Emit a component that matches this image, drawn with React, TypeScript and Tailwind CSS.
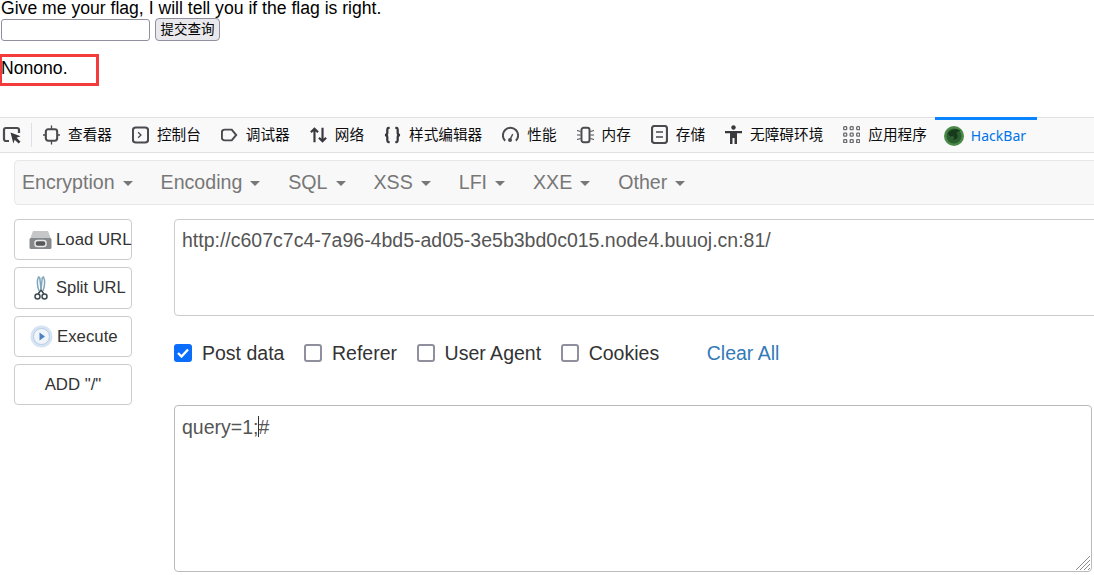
const cjk = "font-['Microsoft_YaHei','Noto_Sans','Noto_Sans_CJK_SC',sans-serif]";

function PickerIcon() {
  return (
    <svg width="20" height="20" viewBox="0 0 20 20" fill="none">
      <path d="M7 16H4a2 2 0 0 1-2-2V5a2 2 0 0 1 2-2h11a2 2 0 0 1 2 2v3" stroke="#4a4a4f" strokeWidth="2.200" />
      <path d="M8.500 7.500l10 3.800-3.900 1.500 3.900 3.900-1.900 1.900-3.900-3.900-1.300 3.900z" fill="#38383d" />
    </svg>
  );
}

const tabs: { label: string; icon: React.ReactNode }[] = [
  {
    label: "查看器",
    icon: (
      <svg width="18" height="20" viewBox="0 0 18 20" fill="none" stroke="#4a4a4f" strokeWidth="2.200">
        <rect x="3" y="4" width="12" height="12" rx="2.500" />
        <path d="M9 0v4M9 16v4M0 10h3M15 10h3" strokeWidth="1.400" />
      </svg>
    ),
  },
  {
    label: "控制台",
    icon: (
      <svg width="18" height="18" viewBox="0 0 18 18" fill="none" stroke="#4a4a4f">
        <rect x="1" y="1" width="16" height="16" rx="3" strokeWidth="2.200" />
        <path d="M6.500 6l3 3-3 3" strokeWidth="1.400" />
      </svg>
    ),
  },
  {
    label: "调试器",
    icon: (
      <svg width="19" height="16" viewBox="0 0 19 16" fill="none" stroke="#4a4a4f" strokeWidth="2.200">
        <path d="M4 2h8l5 6-5 6H4a3 3 0 0 1-3-3V5a3 3 0 0 1 3-3z" />
      </svg>
    ),
  },
  {
    label: "网络",
    icon: (
      <svg width="19" height="18" viewBox="0 0 19 18" fill="none" stroke="#38383d" strokeWidth="2.400">
        <path d="M5 17V2M1 6l4-4 4 4M14 1v15M10 12l4 4 4-4" />
      </svg>
    ),
  },
  {
    label: "样式编辑器",
    icon: (
      <svg width="18" height="18" viewBox="0 0 18 18" fill="none" stroke="#38383d" strokeWidth="2.400">
        <path d="M6 1.500H5C3.500 1.500 3.500 2.500 3.500 4v2.500C3.500 8 3 9 1 9c2 0 2.500 1 2.500 2.500V14c0 1.500 0 2.500 1.500 2.500h1" />
        <path d="M12 1.500h1c1.500 0 1.500 1 1.500 2.500v2.500C14.500 8 15 9 17 9c-2 0-2.500 1-2.500 2.500V14c0 1.500 0 2.500-1.500 2.500h-1" />
      </svg>
    ),
  },
  {
    label: "性能",
    icon: (
      <svg width="19" height="18" viewBox="0 0 19 18" fill="none" stroke="#4a4a4f" strokeWidth="2.200">
        <path d="M3.500 15.500A8.500 8.500 0 1 1 15.500 15.500" />
        <circle cx="9" cy="14.500" r="2.200" fill="#4a4a4f" stroke="none" />
        <path d="M9.500 13l2.500-5" strokeWidth="1.500" />
      </svg>
    ),
  },
  {
    label: "内存",
    icon: (
      <svg width="19" height="18" viewBox="0 0 19 18" fill="none" stroke="#4a4a4f">
        <rect x="5" y="1" width="9" height="16" rx="2.500" strokeWidth="2.200" />
        <path d="M0 4l4 1M0 9h4M0 14l4-1M15 5l4-1M15 9h4M15 13l4 1" strokeWidth="1.200" />
      </svg>
    ),
  },
  {
    label: "存储",
    icon: (
      <svg width="17" height="19" viewBox="0 0 17 19" fill="none" stroke="#4a4a4f">
        <rect x="1" y="1" width="15" height="17" rx="2.500" strokeWidth="2.200" />
        <path d="M5 7h7M5 12h7" strokeWidth="1.500" />
      </svg>
    ),
  },
  {
    label: "无障碍环境",
    icon: (
      <svg width="17" height="19" viewBox="0 0 17 19" fill="#38383d">
        <circle cx="8.500" cy="2.500" r="2.200" />
        <path d="M0 6h17v2.200h-5V19H9.500v-6h-2v6H5V8.200H0z" />
      </svg>
    ),
  },
  {
    label: "应用程序",
    icon: (
      <svg width="17" height="17" viewBox="0 0 17 17" fill="none" stroke="#6a6a6f" strokeWidth="1.300">
        {[0, 6.500, 13].flatMap((y) =>
          [0, 6.500, 13].map((x) => <rect key={`${x}-${y}`} x={x + 0.7} y={y + 0.7} width="3" height="3" rx="0.800" />),
        )}
      </svg>
    ),
  },
];

function HackBarIcon() {
  return (
    <svg width="20" height="20" viewBox="0 0 20 20">
      <circle cx="10" cy="10" r="10" fill="#4a8a48" />
      <circle cx="10" cy="10" r="7.500" fill="#2c5f30" />
      <path d="M4 7c3-4 9-5 13-2-3 0-5 1-4 3 2 2 0 6-4 6 2-2 1-4-1-4-2 1-3 0-4-3z" fill="#173a1c" />
    </svg>
  );
}

function DriveIcon() {
  return (
    <svg width="23" height="20" viewBox="0 0 23 20">
      <path d="M4 1h15l3 8H1z" fill="#c4c6c7" />
      <rect x="0.500" y="8" width="22" height="11" rx="1.500" fill="#85898b" />
      <rect x="6" y="10.500" width="11" height="6" rx="2.500" fill="#55595b" stroke="#e8e8e8" strokeWidth="1.500" />
    </svg>
  );
}

function ScissorsIcon() {
  return (
    <svg width="14" height="25" viewBox="0 0 14 25" fill="none">
      <path d="M5 15C3 9 2.500 5 4.500 1c1 0 1.500 1 1.500 3l1 9" stroke="#7fa6bb" strokeWidth="1.500" />
      <path d="M9 15c2-6 2.500-10 .5-14-1 0-1.500 1-1.500 3l-1 9" stroke="#7fa6bb" strokeWidth="1.500" />
      <circle cx="3.500" cy="20.500" r="2.500" stroke="#3d4a50" strokeWidth="1.500" />
      <circle cx="10.500" cy="20.500" r="2.500" stroke="#3d4a50" strokeWidth="1.500" />
      <path d="M4 18l3-4 3 4" stroke="#3d4a50" strokeWidth="1.500" />
    </svg>
  );
}

function PlayIcon() {
  return (
    <svg width="23" height="23" viewBox="0 0 23 23">
      <circle cx="11.500" cy="11.500" r="11" fill="#d5e3f3" />
      <circle cx="11.500" cy="11.500" r="8" fill="#f1f4f8" stroke="#b7cde6" />
      <path d="M9.500 7.500l5.500 4-5.500 4z" fill="#4a83c4" />
    </svg>
  );
}

const menus = ["Encryption", "Encoding", "SQL", "XSS", "LFI", "XXE", "Other"];

const sideButtons: { label: string; icon?: React.ReactNode; h: string; text?: string }[] = [
  { label: "Load URL", icon: <DriveIcon />, h: "h-[41px]" },
  { label: "Split URL", icon: <ScissorsIcon />, h: "h-[42px]", text: "-ml-px -mt-px text-[16.500px]" },
  { label: "Execute", icon: <PlayIcon />, h: "h-[41px]" },
  { label: 'ADD "/"', h: "h-[41px]" },
];

function Check({ label, checked }: { label: string; checked?: boolean }) {
  return (
    <label className="flex items-center gap-[10px]">
      {checked ? (
        <span className="flex h-[18px] w-[18px] items-center justify-center rounded-[3px] bg-[#0b6dfb]">
          <svg width="12" height="10" viewBox="0 0 12 10" fill="none" stroke="white" strokeWidth="2.400">
            <path d="M1 5l3.500 3.500L11 1.500" />
          </svg>
        </span>
      ) : (
        <span className="h-[18px] w-[18px] rounded-[3px] border-2 border-[#8f8f9d] bg-white" />
      )}
      <span className="pt-px">{label}</span>
    </label>
  );
}

export default function App() {
  return (
    <div className="h-[575px] w-[1094px] overflow-hidden bg-white">
      <section className="h-[117px] font-['Liberation_Sans',sans-serif] text-[17.600px] leading-[17px] text-black">
        <div className="whitespace-nowrap pl-px">Give me your flag, I will tell you if the flag is right.</div>
        <div className="flex items-start gap-[5px] pl-px">
          <input className="mt-[2px] h-[22px] w-[149px] rounded-[3px] border border-[#8f8f9d] bg-white" />
          <button className={`mt-px h-[23px] w-[65px] rounded-[4px] border border-[#8f8f9d] bg-[#e9e9ed] text-[13.500px] leading-none ${cjk}`}>
            提交查询
          </button>
        </div>
        <div className="mt-[13px] flex h-[32px] w-[99px] items-center border-[3px] border-l-2 border-[#f33b3b]">
          <span className="-ml-px -mt-[3px]">Nonono.</span>
        </div>
      </section>

      <nav className={`flex h-[36px] items-center border-y border-[#e0e0e2] bg-[#f9f9fa] text-[14.650px] text-[#0c0c0d] ${cjk}`}>
        <div className="flex items-center pl-[2px]">
          <PickerIcon />
          <div className="ml-[9px] h-[24px] w-px bg-[#e0e0e2]" />
        </div>
        <div className="ml-[1px] flex h-full items-center">
          {tabs.map((t) => (
            <div key={t.label} className="flex items-center gap-[8px] px-[10px] whitespace-nowrap">
              <span className="flex w-[17px] justify-center">{t.icon}</span>
              <span className="-mt-px">{t.label}</span>
            </div>
          ))}
          <div className="-ml-[2px] -mt-px flex h-[36px] w-[102px] items-center gap-[7px] border-t-[3px] border-[#0a84ff] pl-[9px] text-[14px] text-[#0074e8]">
            <HackBarIcon />
            <span className="-mt-[2px]">HackBar</span>
          </div>
        </div>
      </nav>

      <div className="pl-[14px] pt-[7px] font-['Liberation_Sans',sans-serif]">
        <div className="flex h-[45px] w-[1100px] items-center gap-[28px] rounded-[4px] border border-[#e7e7e7] bg-[#f8f8f8] pl-[7px] text-[19.600px] text-[#777777]">
          {menus.map((m) => (
            <div key={m} className="flex items-center gap-[8px]">
              <span>{m}</span>
              <span className="mt-[2px] h-0 w-0 border-x-[5px] border-t-[5px] border-x-transparent border-t-[#777777]" />
            </div>
          ))}
        </div>

        <div className="mt-[14px] flex gap-[42px]">
          <div className="flex w-[118px] shrink-0 flex-col gap-[7px]">
            {sideButtons.map((b) => (
              <div
                key={b.label}
                className={`flex ${b.h} items-center gap-[4px] rounded-[4px] border border-[#cccccc] text-[16.800px] whitespace-nowrap text-[#333333] ${b.icon ? "pl-[14px]" : "justify-center"}`}
              >
                {b.icon && <span className="flex w-[24px] justify-center">{b.icon}</span>}
                <span className={b.text}>{b.label}</span>
              </div>
            ))}
          </div>

          <div className="w-[918px] shrink-0">
            <div className="h-[97px] w-[930px] rounded-[4px] border border-[#cccccc] px-[7px] pt-[7px] text-[19.500px] leading-[27px] whitespace-nowrap text-[#555555]">
              http://c607c7c4-7a96-4bd5-ad05-3e5b3bd0c015.node4.buuoj.cn:81/
            </div>
            <div className="mt-[28px] flex h-[18px] items-center gap-[19.600px] text-[19.500px] text-[#333333]">
              <Check label="Post data" checked />
              <Check label="Referer" />
              <Check label="User Agent" />
              <Check label="Cookies" />
              <a className="ml-[28px] pt-px text-[#337ab7]">Clear All</a>
            </div>
            <div className="relative mt-[43px]">
              <textarea
                readOnly
                defaultValue="query=1;#"
                className="block h-[167px] w-[918px] resize-none rounded-[4px] border border-[#bbbbbb] px-[7px] pt-[8px] text-[19.500px] leading-[27px] text-[#555555] outline-none"
              />
              <span className="absolute left-[84px] top-[11px] h-[21px] w-px bg-[#333333]" />
              <svg className="absolute bottom-[2px] right-[2px]" width="15" height="15" viewBox="0 0 15 15" stroke="#8a8a8a" strokeWidth="1">
                <path d="M1 15L15 1M5 15L15 5M9 15l6-6M13 15l2-2" />
              </svg>
            </div>
          </div>
        </div>
      </div>
    </div>
  );
}
